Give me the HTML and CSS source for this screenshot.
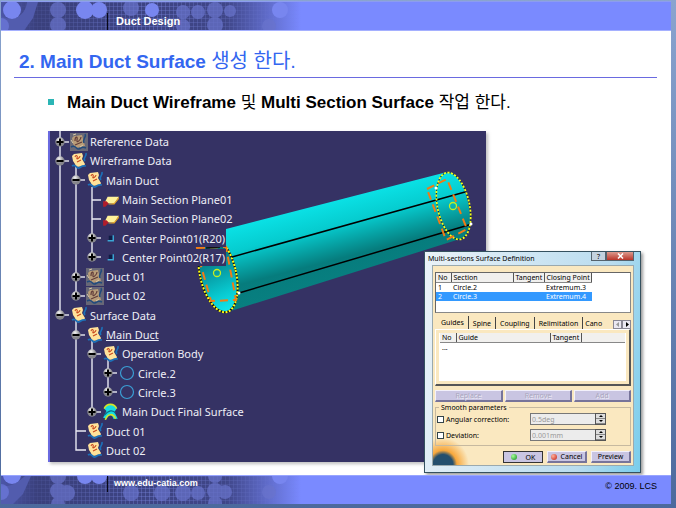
FILE: index.html
```html
<!DOCTYPE html>
<html lang="ko">
<head>
<meta charset="utf-8">
<title>Duct Design</title>
<link rel="stylesheet" href="styles.css">
</head>
<body>
<svg class="defs" aria-hidden="true">
  <defs>
    <radialGradient id="ball" cx="0.4" cy="0.25"><stop offset="0" stop-color="#f4f4f4"/><stop offset="1" stop-color="#85858b"/></radialGradient>
    <linearGradient id="fade"><stop offset="0" stop-color="#4c56a8"/><stop offset="0.12" stop-color="#3a407c"/><stop offset="0.75" stop-color="#3f4688"/><stop offset="1" stop-color="#7a8aff"/></linearGradient>
    <pattern id="mesh" width="4" height="4" patternUnits="userSpaceOnUse"><path d="M0 .5H4M.5 0V4" stroke="#7784dc" stroke-opacity=".4"/></pattern>
    <linearGradient id="meshfade"><stop offset="0" stop-color="#fff" stop-opacity="0"/><stop offset=".5" stop-color="#fff"/><stop offset="1" stop-color="#fff" stop-opacity="0"/></linearGradient>
    <mask id="meshmask"><rect width="300" height="30" fill="url(#meshfade)"/></mask>
    <symbol id="plus" viewBox="0 0 14 12"><path d="M8 6H14" stroke="#e8e8f0" stroke-width="1.4"/><circle cx="5" cy="6" r="4.7" fill="url(#ball)"/><path d="M1.5 6H8.500M5 2.500V9.500" stroke="#000" stroke-width="2"/></symbol>
    <symbol id="minus" viewBox="0 0 14 12"><path d="M8 6H14" stroke="#e8e8f0" stroke-width="1.4"/><circle cx="5" cy="6" r="4.700" fill="url(#ball)"/><path d="M1.500 6H8.500" stroke="#000" stroke-width="2"/></symbol>
    <symbol id="set" viewBox="0 0 16 18"><path d="M1 4 3 2 11 1 12 4 11 7 14 12 13 14 5 15 4 12 2 9Z" fill="#ffe29a"/><path d="M4 5C5 2 7 4 6 6S9 6 9 4M6 10 10 8" fill="none" stroke="#c8471e" stroke-width="1.100"/><path d="M15 1C16 5 11 6 14 9M1 14C5 11 5 17 8 16S10 13 15 14" fill="none" stroke="#1c70b8" stroke-width="1.700"/></symbol>
    <symbol id="hiddenset" viewBox="0 0 18 18"><path d="M0 0H18V18H0Z" fill="#686877"/><path d="M2 5 4 3 12 2 13 6 15 13 6 15 3 11Z" fill="#b89c78"/><path d="M5 8C5 3 8 3 7 7S11 7 11 4M5 12 12 9" fill="none" stroke="#633e3b" stroke-width="1.200"/><path d="M15 1C17 4 12 6 14 10M1 14C6 11 6 17 9 16S11 13 16 15" fill="none" stroke="#214b7d" stroke-width="1.500"/><path d="M3 2 6 1M1 7 3 10M10 14 13 12" stroke="#d9c9a5"/></symbol>
    <symbol id="plane" viewBox="0 0 16 14"><path d="M5 4H15L11 10H2Z" fill="#fff29a"/><path d="M11 9.500 15 4V6L11 11H5Z" fill="#e3a52a"/><path d="M1 8H4L6 10 3 13H1Z" fill="#b11d2b"/></symbol>
    <symbol id="point" viewBox="0 0 16 14"><path d="M6 5H10V9H6Z" fill="#101d45"/><path d="M10 4.500V9.500H5" fill="none" stroke="#3ba6d5" stroke-width="1.300"/></symbol>
    <symbol id="circle" viewBox="0 0 18 18"><circle cx="9" cy="9" r="6.500" fill="none" stroke="#3b9ed4" stroke-width="1.200"/></symbol>
    <symbol id="surface" viewBox="0 0 16 16"><path d="M2 5C4 0 11 0 13 5L11 8 14 14H10C9 9 6 10 4 14L1 13 4 7Z" fill="#16dce2"/><path d="M2 5C4 0 11 0 13 5M3 15C5 9 10 9 12 14" fill="none" stroke="#d2e529" stroke-width="1.400"/><path d="M2 11C6 6 10 6 12 9" fill="none" stroke="#0b6d89"/></symbol>
  </defs>
</svg>

<header class="band band-top">
  <svg class="texture" width="300" height="30" viewBox="0 0 300 30" preserveAspectRatio="xMinYMin slice" aria-hidden="true">
    <rect width="300" height="30" fill="url(#fade)"/>
    <rect width="300" height="30" fill="url(#mesh)" mask="url(#meshmask)"/>
    <path d="M0 14C10 20 24 16 26 0H37L32 16 22 30H0Z" fill="#525cae"/>
    <g fill="#7886ef"><circle cx="11" cy="8" r="9"/><circle cx="84" cy="8" r="9"/><circle cx="98" cy="8" r="8"/><circle cx="151" cy="8" r="7"/><circle cx="279" cy="8" r="8"/><circle cx="0" cy="24" r="8" opacity=".5"/></g>
    <g fill="#6974cc" opacity=".7"><circle cx="57" cy="8" r="8"/><circle cx="57" cy="23" r="8"/><circle cx="130" cy="6" r="8"/><circle cx="182" cy="10" r="7"/><circle cx="197" cy="10" r="7"/><circle cx="214" cy="8" r="8"/><circle cx="229" cy="9" r="6"/><circle cx="214" cy="23" r="8"/><circle cx="182" cy="24" r="7"/><circle cx="268" cy="24" r="7"/></g>
    <path d="M106.500 11V30" stroke="#080818"/>
  </svg>
  <strong class="course">Duct Design</strong>
</header>

<main class="slide">
  <h1 class="title">2. Main Duct Surface <span class="hangul">생성 한다.</span></h1>
  <ul class="points"><li>Main Duct Wireframe <span class="hangul">및</span> Multi Section Surface <span class="hangul">작업 한다.</span></li></ul>

  <div class="stage">
    <section class="viewer">
      <svg class="scene" viewBox="48 131 438 331" width="438" height="331" aria-hidden="true">
        <defs>
          <linearGradient id="skin" gradientUnits="userSpaceOnUse" x1="330" y1="202" x2="350" y2="279"><stop offset="0" stop-color="#0ae1e5"/><stop offset=".3" stop-color="#06cccf"/><stop offset=".72" stop-color="#067c7d"/><stop offset="1" stop-color="#087f80"/></linearGradient>
          <linearGradient id="inside" gradientUnits="userSpaceOnUse" x1="213" y1="250" x2="225" y2="312"><stop offset="0" stop-color="#056e78"/><stop offset=".7" stop-color="#08c9d0"/><stop offset="1" stop-color="#10e8ed"/></linearGradient>
          <clipPath id="cut"><path d="M190 246H226V229H486V330H190Z"/></clipPath>
        </defs>
        <g fill="none" stroke="#e9e9f2" stroke-width="1.400">
          <path d="M60 131V315M76 167V296M92 187V258M92 200H101M92 219H101M76 321V450H86M76 431H86M92 340V411M108 360V392"/>
        </g>
        <path d="M226 229 447 172C456 171 464 184 468 202S470 237 460 239L234 310 226 312Z" fill="url(#skin)"/>
        <g clip-path="url(#cut)">
          <ellipse cx="218" cy="274" rx="18" ry="39" transform="rotate(-13 218 274)" fill="url(#inside)"/>
          <ellipse cx="218" cy="274" rx="18" ry="39" transform="rotate(-13 218 274)" fill="none" stroke="#111" stroke-width="2"/>
          <ellipse cx="218" cy="274" rx="18" ry="39" transform="rotate(-13 218 274)" fill="none" stroke="#ffff18" stroke-width="2" stroke-dasharray="2 1.500"/>
          <path d="M197 248 226 247 236 300 211 301 201 266Z" fill="none" stroke="#f07b16" stroke-width="2" stroke-dasharray="8 5"/>
          <path d="M206 248 220 247" stroke="#111" stroke-width="1.500"/>
        </g>
        <path d="M232 257 465 192M239 293 472 224" stroke="#000" stroke-width="1.500"/>
        <ellipse cx="453.500" cy="206" rx="16" ry="34" transform="rotate(-12 453.500 206)" fill="none" stroke="#172b32" stroke-width="1"/>
        <ellipse cx="453.500" cy="206" rx="16" ry="34" transform="rotate(-12 453.500 206)" fill="none" stroke="#f6ff18" stroke-width="1.800" stroke-dasharray="2 1.600"/>
        <path d="M427 189 447 179 467 229 446 240Z" fill="none" stroke="#f07b16" stroke-width="2" stroke-dasharray="8 5"/>
        <g fill="none" stroke="#c7ef20" stroke-width="1.300"><circle cx="217" cy="273" r="3.500"/><circle cx="453" cy="206" r="3.500"/></g>
        <g fill="#fff"><circle cx="239" cy="293" r="1.500"/><circle cx="436" cy="188" r="1.500"/><circle cx="471" cy="224" r="1.500"/></g>
      </svg>
      <ul class="tree">
        <li><svg class="knob"><use href="#plus"/></svg><svg class="pic"><use href="#hiddenset"/></svg><span>Reference Data</span></li>
        <li><svg class="knob"><use href="#minus"/></svg><svg class="pic"><use href="#set"/></svg><span>Wireframe Data</span></li>
        <li class="l1"><svg class="knob"><use href="#minus"/></svg><svg class="pic"><use href="#set"/></svg><span>Main Duct</span></li>
        <li class="l2"><svg class="knob"></svg><svg class="pic"><use href="#plane"/></svg><span>Main Section Plane01</span></li>
        <li class="l2"><svg class="knob"></svg><svg class="pic"><use href="#plane"/></svg><span>Main Section Plane02</span></li>
        <li class="l2"><svg class="knob"><use href="#plus"/></svg><svg class="pic"><use href="#point"/></svg><span>Center Point01(R20)</span></li>
        <li class="l2"><svg class="knob"><use href="#plus"/></svg><svg class="pic"><use href="#point"/></svg><span>Center Point02(R17)</span></li>
        <li class="l1"><svg class="knob"><use href="#plus"/></svg><svg class="pic"><use href="#hiddenset"/></svg><span>Duct 01</span></li>
        <li class="l1"><svg class="knob"><use href="#plus"/></svg><svg class="pic"><use href="#hiddenset"/></svg><span>Duct 02</span></li>
        <li><svg class="knob"><use href="#minus"/></svg><svg class="pic"><use href="#set"/></svg><span>Surface Data</span></li>
        <li class="l1"><svg class="knob"><use href="#minus"/></svg><svg class="pic"><use href="#set"/></svg><span class="current">Main Duct</span></li>
        <li class="l2"><svg class="knob"><use href="#minus"/></svg><svg class="pic"><use href="#set"/></svg><span>Operation Body</span></li>
        <li class="l3"><svg class="knob"><use href="#plus"/></svg><svg class="pic"><use href="#circle"/></svg><span>Circle.2</span></li>
        <li class="l3"><svg class="knob"><use href="#plus"/></svg><svg class="pic"><use href="#circle"/></svg><span>Circle.3</span></li>
        <li class="l2"><svg class="knob"><use href="#plus"/></svg><svg class="pic"><use href="#surface"/></svg><span>Main Duct Final Surface</span></li>
        <li class="l1"><svg class="knob"></svg><svg class="pic"><use href="#set"/></svg><span>Duct 01</span></li>
        <li class="l1"><svg class="knob"></svg><svg class="pic"><use href="#set"/></svg><span>Duct 02</span></li>
      </ul>
    </section>

    <section class="dialog" role="dialog" aria-labelledby="dlg-title">
      <div class="caption"><h2 id="dlg-title">Multi-sections Surface Definition</h2><button class="help" type="button">?</button><button class="close" type="button" aria-label="Close"><svg width="7" height="6" viewBox="0 0 7 6"><path d="M1 .5 6 5.500M6 .5 1 5.500" stroke="#fff" stroke-width="1.500"/></svg></button></div>
      <form class="form">
        <div class="list sections">
          <table>
            <thead><tr><th class="c-no">No</th><th class="c-section">Section</th><th class="c-tan">Tangent</th><th class="c-close">Closing Point</th></tr></thead>
            <tbody><tr><td>1</td><td>Circle.2</td><td></td><td>Extremum.3</td></tr>
            <tr class="picked"><td>2</td><td>Circle.3</td><td></td><td>Extremum.4</td></tr></tbody>
          </table>
        </div>
        <div class="tabs">
          <button type="button" class="on">Guides</button><button type="button">Spine</button><button type="button">Coupling</button><button type="button">Relimitation</button><button type="button" class="cut">Cano</button>
          <div class="scrollers"><button type="button" aria-label="Previous tabs"><svg width="4" height="5" viewBox="0 0 4 5"><path d="M3 0V5L0 2.500Z" fill="#999"/></svg></button><button type="button" aria-label="Next tabs"><svg width="4" height="5" viewBox="0 0 4 5"><path d="M1 0V5L4 2.500Z"/></svg></button></div>
        </div>
        <div class="list guides">
          <table>
            <thead><tr><th class="g-no">No</th><th class="g-guide">Guide</th><th class="g-tan">Tangent</th><th></th></tr></thead>
            <tbody><tr><td>...</td><td></td><td></td><td></td></tr></tbody>
          </table>
        </div>
        <div class="edits"><button type="button" disabled>Replace</button><button type="button" disabled>Remove</button><button type="button" disabled>Add</button></div>
        <fieldset>
          <legend>Smooth parameters</legend>
          <div class="param"><input type="checkbox" id="ang"><label for="ang">Angular correction:</label><input type="text" value="0.5deg" aria-label="Angular value" disabled><span class="spin"><button type="button" aria-label="Increase angle"><svg width="4" height="2" viewBox="0 0 4 2"><path d="M0 2 2 0 4 2Z"/></svg></button><button type="button" aria-label="Decrease angle"><svg width="4" height="2" viewBox="0 0 4 2"><path d="M0 0 2 2 4 0Z"/></svg></button></span></div>
          <div class="param"><input type="checkbox" id="dev"><label for="dev">Deviation:</label><input type="text" value="0.001mm" aria-label="Deviation value" disabled><span class="spin"><button type="button" aria-label="Increase deviation"><svg width="4" height="2" viewBox="0 0 4 2"><path d="M0 2 2 0 4 2Z"/></svg></button><button type="button" aria-label="Decrease deviation"><svg width="4" height="2" viewBox="0 0 4 2"><path d="M0 0 2 2 4 0Z"/></svg></button></span></div>
        </fieldset>
        <div class="actions"><button type="button" class="default"><i class="lamp green"></i>OK</button><button type="button"><i class="lamp red"></i>Cancel</button><button type="button">Preview</button></div>
      </form>
    </section>
  </div>
</main>

<footer class="band band-bottom">
  <svg class="texture" width="300" height="29" viewBox="0 0 300 29" preserveAspectRatio="xMinYMin slice" aria-hidden="true">
    <rect width="300" height="30" fill="url(#fade)"/>
    <rect width="300" height="30" fill="url(#mesh)" mask="url(#meshmask)"/>
    <path d="M0 10C10 12 18 5 24 0H30L22 18 10 30H0Z" fill="#525cae"/>
    <g fill="#7886ef"><circle cx="11" cy="-1" r="9"/><circle cx="84" cy="0" r="8"/><circle cx="98" cy="0" r="8"/><circle cx="279" cy="0" r="8"/><circle cx="0" cy="16" r="8" opacity=".5"/></g>
    <g fill="#6974cc" opacity=".7"><circle cx="57" cy="0" r="8"/><circle cx="57" cy="15" r="8"/><circle cx="66" cy="17" r="8"/><circle cx="57" cy="28" r="7"/><circle cx="130" cy="17" r="8"/><circle cx="161" cy="17" r="8"/><circle cx="182" cy="17" r="8"/><circle cx="197" cy="17" r="7"/><circle cx="214" cy="0" r="7"/><circle cx="214" cy="15" r="8"/><circle cx="214" cy="27" r="7"/><circle cx="224" cy="16" r="7"/><circle cx="268" cy="16" r="7"/></g>
    <path d="M106.500 0V16" stroke="#080818"/>
  </svg>
  <a class="site" href="#">www.edu-catia.com</a>
  <small class="credit">© 2009. LCS</small>
</footer>
</body>
</html>
```

FILE: styles.css
```css
* { box-sizing: border-box; }

body {
  display: flex;
  flex-direction: column;
  min-height: 100vh;
  margin: 0;
  padding: 1px 5px 4px 1px;
  background: linear-gradient(#8aa4cf, #4c699d);
  font-family: "Liberation Sans", "Noto Sans CJK KR", sans-serif;
  color: #000;
}

ul { margin: 0; padding: 0; list-style: none; }
button, input { margin: 0; padding: 0; font: inherit; color: inherit; }
.defs { position: absolute; width: 0; height: 0; }

/* Coloured bands */
.band {
  position: relative;
  display: flex;
  background: #7a8aff;
}
.band-top { height: 30px; align-items: flex-end; border-top: 1px solid #8c9cf0; border-bottom: 1px solid #a5b0ff; }
.band-bottom { height: 29px; align-items: flex-start; justify-content: space-between; border-top: 1px solid #98a5ff; }
.texture { position: absolute; top: 0; left: 0; height: 100%; }
.course { position: relative; padding: 0 0 2px 115px; font-size: 11px; line-height: 14px; color: #fff; }
.site { position: relative; padding: 1px 0 0 113px; font-size: 9px; font-weight: bold; line-height: 12px; color: #fff; text-decoration: none; }
.credit { padding: 4px 14px 0 0; font-size: 9px; line-height: 12px; }

/* Slide */
.slide { flex: 1; background: #fff; }
.title {
  margin: 0 14px 0 13px;
  padding: 19px 0 4px 5px;
  border-bottom: 1px solid #6a6ae0;
  font-size: 19px;
  line-height: 23px;
  color: #3366f0;
}
.hangul { font-weight: 400; }
.title .hangul { font-size: 20px; line-height: 20px; }
.points li {
  display: block;
  padding: 14px 0 0 66px;
  font-size: 17px;
  font-weight: bold;
  line-height: 22px;
  background: linear-gradient(#2bb5b5, #2bb5b5) 47px 21px / 6px 6px no-repeat;
}
.stage { position: relative; margin: 17px 30px 0 47px; }

/* 3D viewer */
.viewer {
  position: relative;
  max-width: 438px;
  height: 331px;
  padding: 1px 0 2px 8px;
  background: #353264;
  border-left: 2px solid #6a6ae0;
  box-shadow: 2px 2px 3px #8888;
}
.scene { position: absolute; top: 0; left: -2px; }
.tree {
  position: relative;
  display: grid;
  grid-auto-rows: 1fr;
  height: 100%;
  font-family: "Noto Sans", sans-serif;
  font-size: 11px;
  line-height: 17px;
  color: #eeeef6;
}
.tree li { display: flex; align-items: center; padding-left: 0; }
.tree .l1 { padding-left: 16px; }
.tree .l2 { padding-left: 32px; }
.tree .l3 { padding-left: 48px; }
.tree span { padding-right: 1px; background: #353264; }
.tree .current { text-decoration: underline; }
.knob { width: 14px; height: 12px; margin-left: -3px; flex: none; }
.pic { width: 18px; height: 18px; margin: 0 2px 0 1px; flex: none; }

/* Dialog */
.dialog {
  position: absolute;
  top: 120px;
  left: 376px;
  width: 217px;
  padding: 0 6px 6px 7px;
  border: 1px solid #35515f;
  background: linear-gradient(100deg, #eaf2f8, #b9dcef 75%, #79cdec);
  box-shadow: 2px 2px 3px #0006;
  font-family: "Noto Sans", sans-serif;
  font-size: 7px;
  line-height: 9px;
}
.caption { display: flex; height: 13px; align-items: flex-start; }
.caption h2 { flex: 1; margin: 0 0 0 -4px; font-size: 7px; font-weight: 400; line-height: 13px; }
.caption button { height: 9px; border: 1px solid #54636e; border-top: 0; line-height: 7px; text-align: center; }
.help { width: 15px; background: #c3d2df; }
.close { width: 28px; background: linear-gradient(#dc9a8e, #b9352a); }
.close svg { display: block; margin: auto; }
.form {
  padding: 6px 2px 2px;
  border: 1px solid #9aa9ae;
  background: radial-gradient(ellipse at 10px 100%, #244f6d 0 10px, #f7a83c 14px, #fae8c000 26px), #fae8c0;
}
.list { background: #fff; border: 1px solid #666; border-right: 2px solid #555; border-bottom: 2px solid #555; }
.list table { border-collapse: collapse; table-layout: fixed; }
.list th, .list td { height: 9px; padding: 0 2px; font-weight: 400; line-height: 9px; text-align: left; white-space: nowrap; }
.list th { background: #f1f0ee; border-right: 1px solid #555; border-bottom: 1px solid #888; }
.sections { height: 41px; border-right: 1px solid #888; border-bottom: 1px solid #888; }
.sections table { width: 156px; }
.c-no { width: 15px; }
.c-section { width: 62px; }
.c-tan { width: 31px; }
.picked { background: #3399ff; color: #fff; }
.tabs { display: flex; height: 16px; align-items: flex-end; padding-left: 2px; }
.tabs > button { height: 12px; padding: 0 4px; border: 0; border-right: 1px solid #444; background: none; line-height: 11px; }
.tabs > .on { height: 13px; }
.tabs > .cut { flex: 1; padding: 0 0 0 2px; border: 0; text-align: left; }
.scrollers { display: flex; margin-left: 2px; }
.scrollers button { display: grid; place-items: center; width: 9px; height: 9px; border: 1px solid #8a8794; background: #ebe8f2; }
.guides { height: 57px; padding: 3px 4px; border-top-color: #fff; border-left-color: #fff; box-shadow: inset 0 0 0 3px #fae8c0; }
.guides table { width: 100%; background: #fff; }
.g-no { width: 16px; }
.g-guide { width: 94px; }
.g-tan { width: 31px; }
.guides th:last-child { border-right: 0; }
.edits { display: grid; grid-template-columns: 68fr 68fr 57fr; gap: 2px; margin-top: 4px; }
.edits button, .actions button { height: 12px; border: 1px solid #f3f1fb; border-right: 2px solid #77749a; border-bottom: 2px solid #77749a; background: #c9c5e2; line-height: 9px; text-align: center; }
.edits button { color: #aaa6bd; text-shadow: 1px 1px #eeecf6; }
fieldset { display: grid; gap: 4px; margin: 1px 0 0; padding: 1px 24px 4px 0; border: 1px solid #c6b9a0; }
legend { margin-left: 3px; padding: 0 2px; line-height: 9px; }
.param { display: flex; align-items: center; height: 12px; }
.param input[type="checkbox"] { appearance: none; width: 7px; height: 7px; margin: 0 2px 0 1px; border: 1px solid #34444a; background: #fff; }
.param label { flex: 1; white-space: nowrap; }
.param input[type="text"] { width: 65px; height: 12px; padding: 0 1px; border: 1px solid #777; border-right: 0; background: #ececec; color: #999; }
.spin { display: grid; width: 11px; height: 12px; border: 1px solid #555; }
.spin button { display: grid; place-items: center; border: 0; border-bottom: 1px solid #888; background: #ddd; }
.actions { display: flex; justify-content: flex-end; gap: 4px; margin-top: 5px; }
.actions button { display: flex; align-items: center; justify-content: center; gap: 4px; width: 40px; }
.actions .default { gap: 9px; border: 1px solid #333; }
.lamp { width: 6px; height: 6px; border-radius: 3px; }
.green { background: radial-gradient(circle at 2px 2px, #a6ff9a, #128a1c); }
.red { background: radial-gradient(circle at 2px 2px, #ffb09a, #c01c14); }
```
